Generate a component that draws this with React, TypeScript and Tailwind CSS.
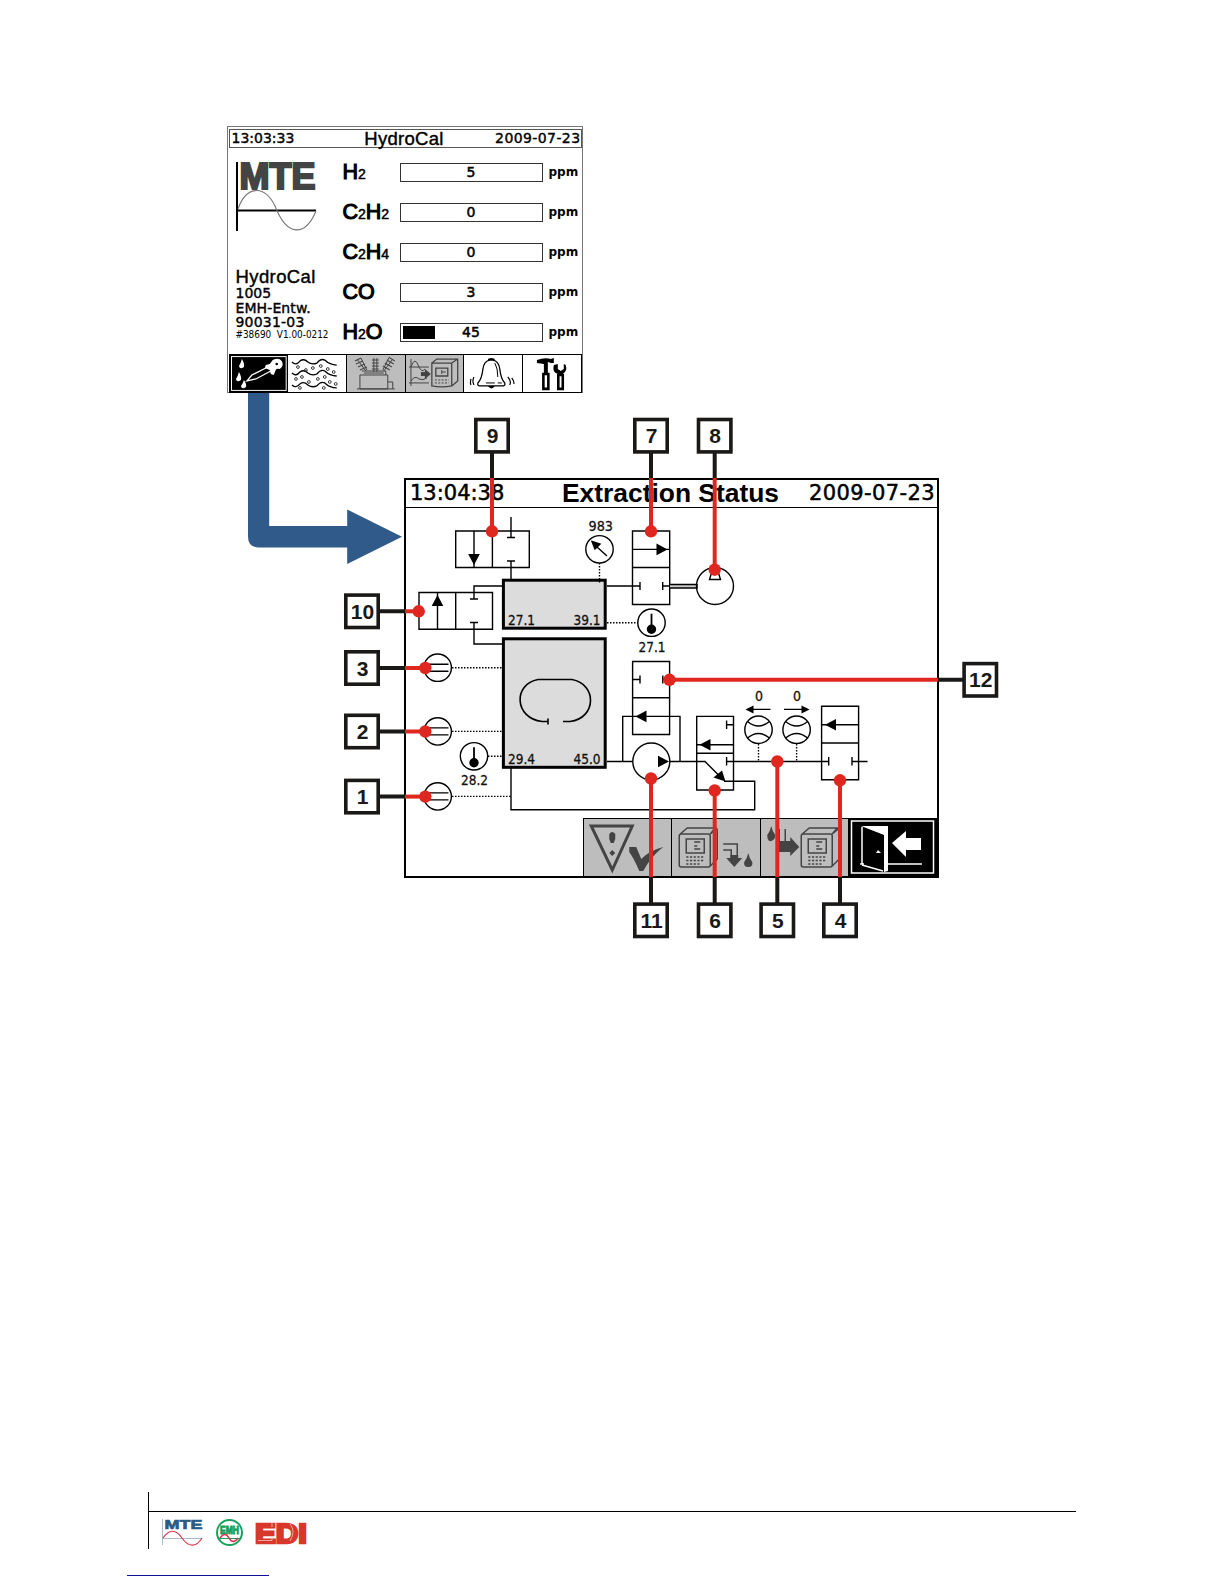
import type { ReactNode } from "react";

const GASES = [
  { label: ["H", "2"], value: 5, fill: 0 },
  { label: ["C", "2", "H", "2"], value: 0, fill: 0 },
  { label: ["C", "2", "H", "4"], value: 0, fill: 0 },
  { label: ["C", "", "O"], value: 3, fill: 0 },
  { label: ["H", "2", "O"], value: 45, fill: 24 },
];

// box centre, panel edge where the line turns red, and the dot
const CALLOUTS = [
  { n: 9, box: [492, 435.7], edge: [492, 478], dot: [492, 531.3] },
  { n: 7, box: [651, 435.7], edge: [651, 478], dot: [651, 531.3] },
  { n: 8, box: [714.7, 435.7], edge: [714.7, 478], dot: [714.7, 569.7] },
  { n: 10, box: [362, 611.3], edge: [405, 611.3], dot: [418.7, 611.3] },
  { n: 3, box: [362, 668], edge: [405, 668], dot: [425.3, 668] },
  { n: 2, box: [362, 731.5], edge: [405, 731.5], dot: [425.3, 731.5] },
  { n: 1, box: [362, 796.6], edge: [405, 796.6], dot: [425.3, 796.6] },
  { n: 12, box: [980.3, 679.8], edge: [938, 679.8], dot: [669.5, 679.8] },
  { n: 11, box: [651, 920.3], edge: [651, 877], dot: [651, 778.5] },
  { n: 6, box: [714.7, 920.3], edge: [714.7, 877], dot: [714.7, 790.5] },
  { n: 5, box: [777.3, 920.3], edge: [777.3, 877], dot: [777.3, 761.5] },
  { n: 4, box: [840, 920.3], edge: [840, 877], dot: [840, 780.3] },
];

export default function App() {
  return (
    <main className="relative w-[1224px] h-[1584px] overflow-hidden bg-white text-black flex flex-col items-start">
      <div className="mt-[126px] ml-[226.5px]">
        <OverviewScreen />
      </div>
      <div className="mt-[85px] ml-[404px]">
        <ExtractionScreen />
      </div>
      <Callouts />
      <Footer />
    </main>
  );
}

function OverviewScreen() {
  return (
    <section className="w-[356px] h-[267px] border border-[#777] flex flex-col pt-[2px] pl-px">
      <header className="w-[353px] h-[19px] shrink-0 border border-[#555] flex items-center justify-between pl-[2px] font-['DejaVu_Sans'] text-[14px] leading-[17px] [-webkit-text-stroke:0.4px_#000]">
        <span className="w-[90px] -mt-px">13:03:33</span>
        <span className="-mt-px -ml-[4px] font-['Liberation_Sans'] text-[18.5px] tracking-[0.3px]">HydroCal</span>
        <span className="-mt-px w-[90px] text-right tracking-[0.4px] whitespace-nowrap">2009-07-23</span>
      </header>

      <div className="flex h-[206px] shrink-0">
        <div className="w-[114px] pl-[6px] pt-[5px]">
          <MteLogo />
          <div className="mt-[36px] pl-px font-['DejaVu_Sans'] text-[14px] leading-[14.6px] whitespace-nowrap [-webkit-text-stroke:0.4px_#000]">
            <p className="font-['Liberation_Sans'] text-[18.5px] leading-[19px] tracking-[0.4px]">HydroCal</p>
            <p>1005</p>
            <p className="tracking-[0.1px]">EMH-Entw.</p>
            <p className="tracking-[0.2px]">90031-03</p>
            <p className="font-['DejaVu_Sans_Condensed','DejaVu_Sans'] [font-stretch:condensed] text-[9.9px] leading-[10px] [-webkit-text-stroke:0]">
              #38690&nbsp; V1.00-0212
            </p>
          </div>
        </div>
        <div className="pt-[5px]">
          {GASES.map((g, i) => (
            <div key={i} className="flex items-center h-[39.85px]">
              <div className="w-[57px] mt-px font-['Liberation_Sans'] text-[21.5px] leading-[24px] whitespace-nowrap [-webkit-text-stroke:1.1px_#000]">
                {g.label.map((part, k) =>
                  k % 2 ? (
                    <span key={k} className="text-[14px] [-webkit-text-stroke:0.5px_#000]">{part}</span>
                  ) : (
                    part
                  )
                )}
              </div>
              <div className="relative w-[143px] h-[19px] border-[1.5px] border-[#333] p-[2px]">
                <div className="h-full bg-black" style={{ width: `${g.fill}%` }} />
                <span className="absolute inset-0 text-center font-['DejaVu_Sans'] text-[14px] leading-[17px] [-webkit-text-stroke:0.5px_#000]">
                  {g.value}
                </span>
              </div>
              <span className="ml-[6px] font-['DejaVu_Sans'] font-bold text-[12px] leading-[14px] -mt-px">ppm</span>
            </div>
          ))}
        </div>
      </div>

      <nav className="flex w-[353px] h-[39px] shrink-0 border border-black">
        <MenuKey tone="bg-black">
          <rect x="1.5" y="1.5" width="55" height="34" fill="none" stroke="#fff" />
          <g fill="#fff">
            <path d="M12 4q-1 4-3 7q1 4 5 1q1-3-2-8M9 17q-1 4-3 7q1 4 5 1q1-3-2-8M14 25q-1 4-3 6q1 4 5 1q1-3-2-7" />
            <path d="M36 10l4-1l3-4q6-3 9 1q3 5-2 8q-3-1-4 1l-2 5l-3-1l-1-4l-5-2z" />
          </g>
          <path d="M38 12L22 20l-5 6l9-2l15-8" fill="none" stroke="#fff" strokeWidth="1.3" />
          <circle cx="47" cy="9" r="1.3" fill="#000" />
        </MenuKey>
        <MenuKey tone="bg-white">
          <g fill="none" stroke="#000" strokeWidth="1.3">
            <path d="M4 7q4 4 8-1q4-3 8 1q4 3 9 1q4-5 8-3q5 5 12 5" />
            <path d="M4 18q4 4 8-1q4-3 8 1q4 3 9 1q4-5 8-3q5 5 12 5" />
            <path d="M4 30q4 4 8-1q4-3 8 1q4 3 9 1q4-5 8-3q5 5 12 5" />
          </g>
          <g fill="none" stroke="#222" strokeWidth=".9">
            {[[10, 12], [18, 15], [25, 13], [33, 11], [40, 14], [46, 17], [8, 24], [14, 22], [21, 27], [30, 24], [37, 22], [42, 27], [48, 29], [12, 33], [36, 33]].map(([x, y]) => (
              <circle key={`${x}-${y}`} cx={x} cy={y} r="1.4" />
            ))}
          </g>
        </MenuKey>
        <MenuKey tone="bg-[#bdbdbd]">
          <g fill="none" stroke="#444">
            <path d="M13 20h28v14H13zM15 16h24v4M17 18h20M10 34h38M41 27h5v7" />
            <path d="M10 4l9 12M14 3l6 12M27 3v14M30 3v14M46 4l-9 12M42 3l-6 12" />
            <path d="M8 6l6-3M9 9l7-3M11 12l7-3M13 15l7-3M25 5h7M25 8h7M25 11h7M25 14h7M42 2l6 4M40 5l7 4M38 8l7 4M36 11l7 4" strokeWidth="1.1" />
          </g>
        </MenuKey>
        <MenuKey tone="bg-[#bdbdbd]">
          <g fill="none" stroke="#444">
            <path d="M5 4v27M3 12h20M3 28h20M5 12q4-12 8 0q3 6 6 2M5 26q4-6 8-2q4 2 8-1" />
            <path d="M26 8h20v23q-10 2-20 0zM26 8l5-4h21v22l-6 5M46 8l6-4M30 13h12v8H30z" strokeWidth="1.3" />
            <path d="M29 25h14M29 28h14" strokeDasharray="2 1.4" />
            <path d="M36 15v4M36 17h4" />
          </g>
          <path d="M15 17h4v-3l6 5l-6 5v-3h-4z" fill="#444" />
        </MenuKey>
        <MenuKey tone="bg-white">
          <path d="M26 5q-6 1-7 9q-1 10-5 14q-1 3 3 3h21q4 0 3-3q-4-4-5-14q-1-8-7-9z" fill="none" stroke="#000" strokeWidth="1.3" />
          <path d="M24 5q0-2 3.500-2t3.500 2zM24 31h7q-3 5-7 0" />
          <path d="M31 8q3 5 3 14M22 28h9M34 28h4" fill="none" stroke="#000" />
          <path d="M10 22q-2 4 0 8M7 24q-1 4 0 6M44 22q4 4 2 8M48 23q3 4 2 6" fill="none" stroke="#000" strokeWidth="1.2" />
        </MenuKey>
        <MenuKey tone="bg-white" last>
          <path d="M14 5q8-3 14-1l3-1v5h-3l-3-1v11h-4V9l-7-1z" />
          <path d="M31 10q-2 7 4 9v2h5v-2q5-3 3-9l-2-1v5l-3 2l-3-2v-5z" />
          <path d="M20.500 19h5v15h-5zM35.500 20h4.500v14h-4.500z" fill="#fff" stroke="#000" strokeWidth="2.600" />
        </MenuKey>
      </nav>
    </section>
  );
}

function MenuKey({ tone, last, children }: { tone: string; last?: boolean; children: ReactNode }) {
  return (
    <div className={`flex-1 ${tone} ${last ? "" : "border-r border-black"}`}>
      <svg viewBox="0 0 58 37" className="block w-full h-full">{children}</svg>
    </div>
  );
}

function MteLogo() {
  return (
    <svg viewBox="0 -8 84 78" className="block w-[84px] h-[78px]">
      <text x="4.500" y="28" textLength="76" lengthAdjust="spacingAndGlyphs" fill="#444" stroke="#444" strokeWidth="2.200" className="font-['Liberation_Sans'] font-bold text-[37px]">
        MTE
      </text>
      <path d="M2 1v69" stroke="#000" strokeWidth="2" />
      <path d="M2 49.500h79" stroke="#000" strokeWidth="2" />
      <path d="M3 48C11 25 29 23 40 45C52 76 70 76 81 50" fill="none" stroke="#777" strokeWidth="1.100" />
    </svg>
  );
}

function ExtractionScreen() {
  return (
    <section className="w-[535px] h-[400px] border-2 border-black flex flex-col">
      <header className="flex items-center justify-between h-[28px] shrink-0 border-b-[1.5px] border-black pl-[4px] pr-[2px] font-['DejaVu_Sans'] text-[21px] leading-[26px] whitespace-nowrap [-webkit-text-stroke:0.5px_#000]">
        <span className="w-[126px] -mt-px">13:04:38</span>
        <span className="-mt-px pr-[4px] font-['Liberation_Sans'] font-bold text-[26.400px] [-webkit-text-stroke:0]">Extraction Status</span>
        <span className="-mt-px tracking-[0.4px]">2009-07-23</span>
      </header>
      <Schematic />
      <div className="flex justify-end h-[58px] shrink-0">
        <SoftKey>
          <path d="M7 7h41L28 51z" fill="none" stroke="#444" strokeWidth="3" />
          <path d="M25 15q3-4 6 0v5l-1.500 4h-3L25 20zM28 31l3 3l-3 3l-3-3z" fill="#444" />
          <path d="M45 28h7l5 12q9-9 22-12q-12 9-20 24h-4q-5-12-10-19z" fill="#444" />
        </SoftKey>
        <SoftKey>
          <Analyzer x={7} />
          <path d="M51 25h14v11M51 31h8v6" fill="none" stroke="#444" strokeWidth="1.500" />
          <path d="M58 36h8v3h4l-8 9l-8-9h4z" fill="#444" />
          <path d="M76 34q1 5 4 9q1 5-4 5t-4-5q3-4 4-9" fill="#444" />
        </SoftKey>
        <SoftKey>
          <path d="M10 7q1 5 4 9q0 5-4 6t-4-6q3-4 4-9M16 22h13v-4l9 10l-9 9v-4H16z" fill="#444" />
          <path d="M18 10v14M24 10v14" stroke="#444" strokeWidth="1.500" />
          <Analyzer x={40} />
        </SoftKey>
        <div className="w-[89px] bg-black">
          <svg viewBox="0 0 89 58" className="block w-full h-full">
            <rect x="3.500" y="3" width="82" height="52" fill="none" stroke="#fff" strokeWidth="1.500" />
            <path d="M13 8h27v45l-4 1V17z" fill="#fff" />
            <path d="M14 9l21 8v36l-21-7z" fill="#000" />
            <path d="M14 9v37M14 47l21 6" fill="none" stroke="#fff" strokeWidth="1.500" />
            <path d="M12 46h4M38 46h36" stroke="#fff" strokeWidth="1.500" />
            <path d="M28 35l2-3l3 3z" fill="#fff" />
            <path d="M44 25l14-12v7h15v12H58v7z" fill="#fff" />
          </svg>
        </div>
      </div>
    </section>
  );
}

function SoftKey({ children }: { children: ReactNode }) {
  return (
    <div className="w-[88.500px] bg-[#bdbdbd] border-l-[1.500px] border-t border-black">
      <svg viewBox="0 0 87 57" className="block w-full h-full">{children}</svg>
    </div>
  );
}

function Analyzer({ x }: { x: number }) {
  return (
    <g transform={`translate(${x} 0)`} fill="none" stroke="#444" strokeWidth="1.500">
      <rect x="0" y="15" width="31" height="33" rx="2" />
      <path d="M1 15l7-6h28l-5 6M36 9q2 0 2 3v28l-7 7M31 15l6-5" />
      <rect x="7" y="20" width="18" height="14" />
      <path d="M15 23h6M15 27h3M15 30h6" />
      <path d="M7 38h18M7 41.500h18M7 45h14" strokeDasharray="2.200 1.500" />
    </g>
  );
}

function Schematic() {
  return (
    <svg viewBox="406 508 531 310" className="block w-[531px] h-[310px] shrink-0" fill="none" stroke="#000" strokeWidth="1.400">
      {/* valve 9 */}
      <path d="M455.700 531h73.600v36.500h-73.600zM492.400 531v36.500M474 531v36M511 517v20.500M507 537.500h8M507 561h8M511 561v18" />
      <Head x={474} y={565} dir="down" />

      {/* valve 10 */}
      <path d="M419 592.500h73.500v36.800H419zM455.700 592.500v36.800M437.500 593v36M502 586h-28v13M470 599h8M470 622.500h8M474 622.500V644h28" />
      <Head x={437.5} y={595} dir="up" />

      {/* tanks */}
      <rect x="503.400" y="580.200" width="101.800" height="48" fill="#dcdcdc" strokeWidth="3" />
      <rect x="503.400" y="638.800" width="101.800" height="128.500" fill="#dcdcdc" strokeWidth="3" />
      <path d="M548 721.500h-6C514 718 513 684 538 679.500h34C597 684 597 718 570 721.500h-7M548 718.500v6" strokeWidth="1.600" />
      <Label x={508} y={625.300}>27.1</Label>
      <Label x={573.500} y={625.300}>39.1</Label>
      <Label x={508} y={763.700}>29.4</Label>
      <Label x={573.500} y={763.700}>45.0</Label>

      {/* pressure gauge */}
      <circle cx="599.500" cy="549.300" r="13.700" />
      <path d="M607 556l-10-9" />
      <path d="M592 541.500l8 2.500l-5 5z" fill="#000" />
      <path d="M599.500 563v21" strokeDasharray="1.500 1.500" />
      <Label x={588.500} y={531.300} w={24.500}>983</Label>

      {/* valve 7 and vacuum pump */}
      <path d="M632.500 531h37.200v73.500h-37.200zM632.500 567.500h37.200M632.500 549.400h37.200M607 586h33M640 582v8M662.700 582v8M662.700 586h7" />
      <Head x={667.500} y={549.400} dir="right" />
      <path d="M670 584.500h27v3.500h-27" fill="#ccc" />
      <circle cx="715" cy="586" r="18.500" />
      <path d="M711.500 573l-2 6.500h11l-2-6.500" />

      {/* thermometers */}
      <path d="M607 622.700h31M488 756.300h14" strokeDasharray="1.500 1.500" />
      <Thermometer x={651.500} y={622.700} />
      <Label x={638.500} y={652}>27.1</Label>
      <Thermometer x={474} y={756.300} />
      <Label x={461} y={785.300}>28.2</Label>

      {/* level sensors */}
      {[667.700, 731.400, 796.400].map((y, i) => (
        <g key={y}>
          <circle cx="437.700" cy={y} r="13.700" />
          <path d={`M427 ${y - 3.500}h21.500M427 ${y + 3.500}h21.500`} />
          <path d={`M452 ${y}H${i === 2 ? 511 : 502}`} strokeDasharray="1.500 1.500" />
        </g>
      ))}

      {/* valve 12, circulation pump and bypass */}
      <path d="M632.600 661.500h37v73h-37zM632.600 697.800h37M633 679.500h7M640 675.500v8M662.800 675.500v8M663 679.500h7" />
      <path d="M607 761.500h25.500M622.700 761.500v-45.100h57.300v45.100M670 761.500h35l17 17M511 768v41.700h243.700v-28.400H724" />
      <Head x={635.500} y={716.400} dir="left" />
      <circle cx="651.300" cy="761.500" r="18.500" />
      <Head x={669} y={761.500} dir="right" />

      {/* valve 6 */}
      <path d="M696.700 716.400h36.800V790h-36.800zM696.700 753.200h36.800M726.600 720.500v8.500M726.600 724.700h7M697 744.700h36.500M726.600 757v8.500M726.600 761.500H829" />
      <Head x={699.500} y={744.700} dir="left" />
      <path d="M725.500 781.500l-12-4l8.500-7z" fill="#000" stroke="none" />

      {/* flow meters */}
      {[758.500, 796.600].map((x) => (
        <g key={x}>
          <circle cx={x} cy="729.700" r="13.700" />
          <path d={`M${x - 11} 721.500q11 9 22 0M${x - 11} 738q11-9 22 0`} />
          <path d={`M${x} 744v17`} strokeDasharray="1.500 1.500" />
          <Label x={x - 3.500} y={701.300} w={8}>0</Label>
        </g>
      ))}
      <path d="M770.500 709.400H748M784 709.400h23" />
      <path d="M745.500 709.400l8-4v8zM809.500 709.400l-8-4v8z" fill="#000" stroke="none" />

      {/* valve 4 */}
      <path d="M821.600 706.300h37v73.500h-37zM821.600 743h37M822 724.700h37M828.700 757v8.500M852 757v8.500M852 761.500h15.500" />
      <Head x={825} y={724.700} dir="left" />
    </svg>
  );
}

const ROTATION = { down: 0, left: 90, up: 180, right: 270 };

function Head({ x, y, dir }: { x: number; y: number; dir: keyof typeof ROTATION }) {
  return (
    <path
      d="M0 0L-5.800 -11H5.800z"
      fill="#000"
      stroke="none"
      transform={`translate(${x} ${y}) rotate(${ROTATION[dir]})`}
    />
  );
}

function Label({ x, y, w = 27, children }: { x: number; y: number; w?: number; children: ReactNode }) {
  return (
    <text x={x} y={y} textLength={w} lengthAdjust="spacingAndGlyphs" fill="#111" stroke="#111" strokeWidth="0.300" className="font-['DejaVu_Sans'] text-[14px]">
      {children}
    </text>
  );
}

function Thermometer({ x, y }: { x: number; y: number }) {
  return (
    <g>
      <circle cx={x} cy={y} r="13.700" />
      <path d={`M${x} ${y - 9}v14`} strokeWidth="1.800" />
      <circle cx={x} cy={y + 6.500} r="4" fill="#000" />
    </g>
  );
}

function Callouts() {
  return (
    <svg viewBox="0 0 1224 1584" className="absolute inset-0 w-[1224px] h-[1584px] pointer-events-none">
      <path d="M248 393h21.200v133h78v-16.500L402 536.700L347.200 564v-16.500H259q-11 0-11-11z" fill="#2f5a89" />
      {CALLOUTS.map(({ n, box, edge, dot }) => (
        <g key={n}>
          <path d={`M${box[0]} ${box[1]}L${edge[0]} ${edge[1]}`} stroke="#1a1917" strokeWidth="4" />
          <path d={`M${edge[0]} ${edge[1]}L${dot[0]} ${dot[1]}`} stroke="#df2720" strokeWidth="4" />
          <circle cx={dot[0]} cy={dot[1]} r="6.200" fill="#df2720" />
          <rect x={box[0] - 16.200} y={box[1] - 16.200} width="32.400" height="32.400" fill="#fff" stroke="#1a1917" strokeWidth="3.600" />
          <text x={box[0] + 0.500} y={box[1] + 7.500} textAnchor="middle" fill="#1a1917" className="font-['Liberation_Sans'] font-bold text-[21px]">
            {n}
          </text>
        </g>
      ))}
    </svg>
  );
}

function Footer() {
  return (
    <footer className="mt-auto h-[92px] w-full flex flex-col items-start">
      <div className="ml-[148px] w-[928px] h-[57px] border-l border-black">
        <div className="h-[20px] border-b border-black" />
        <div className="flex items-start pl-[12px] pt-[5px]">
          <svg viewBox="0 0 44 32" className="w-[44px] h-[32px]">
            <path d="M1.500 2v26M1 21.500h40" stroke="#a9bcc8" />
            <text x="3.500" y="12" textLength="38" lengthAdjust="spacingAndGlyphs" fill="#2b5b84" stroke="#2b5b84" strokeWidth="0.700" className="font-['Liberation_Sans'] font-bold text-[13px]">
              MTE
            </text>
            <path d="M2 21C8 12 15 12 21 21S35 31 41 21" fill="none" stroke="#d8334a" strokeWidth="1.100" />
          </svg>
          <svg viewBox="0 0 30 30" className="ml-[9px] w-[30px] h-[30px]">
            <circle cx="15.500" cy="15.500" r="12.500" fill="#fff" stroke="#18a15c" strokeWidth="2" />
            <text x="6" y="16.500" textLength="19" lengthAdjust="spacingAndGlyphs" fill="#18a15c" stroke="#18a15c" strokeWidth="1" className="font-['Liberation_Sans'] font-bold text-[11px]">
              EMH
            </text>
            <path d="M5 21.500h21" stroke="#18a15c" />
            <path d="M6 21q5-7 9 0t9 0" fill="none" stroke="#d8334a" strokeWidth="1.500" />
          </svg>
          <svg viewBox="0 -2 58 36" className="-mt-[2px] ml-[9px] w-[58px] h-[36px] shrink-0">
            <text x="2" y="25.500" textLength="52" lengthAdjust="spacingAndGlyphs" fill="#d8382c" stroke="#d8382c" strokeWidth="2.600" className="font-['Liberation_Sans'] font-bold text-[28px]">
              EDI
            </text>
            <path d="M5 23.500h14v-4M19 6v4M37 7q6 7 0 17" fill="none" stroke="#f3c3bd" strokeWidth="0.800" />
          </svg>
        </div>
      </div>
      <div className="mt-[26px] ml-[127px] w-[142px] h-px bg-[#10109a]" />
    </footer>
  );
}
